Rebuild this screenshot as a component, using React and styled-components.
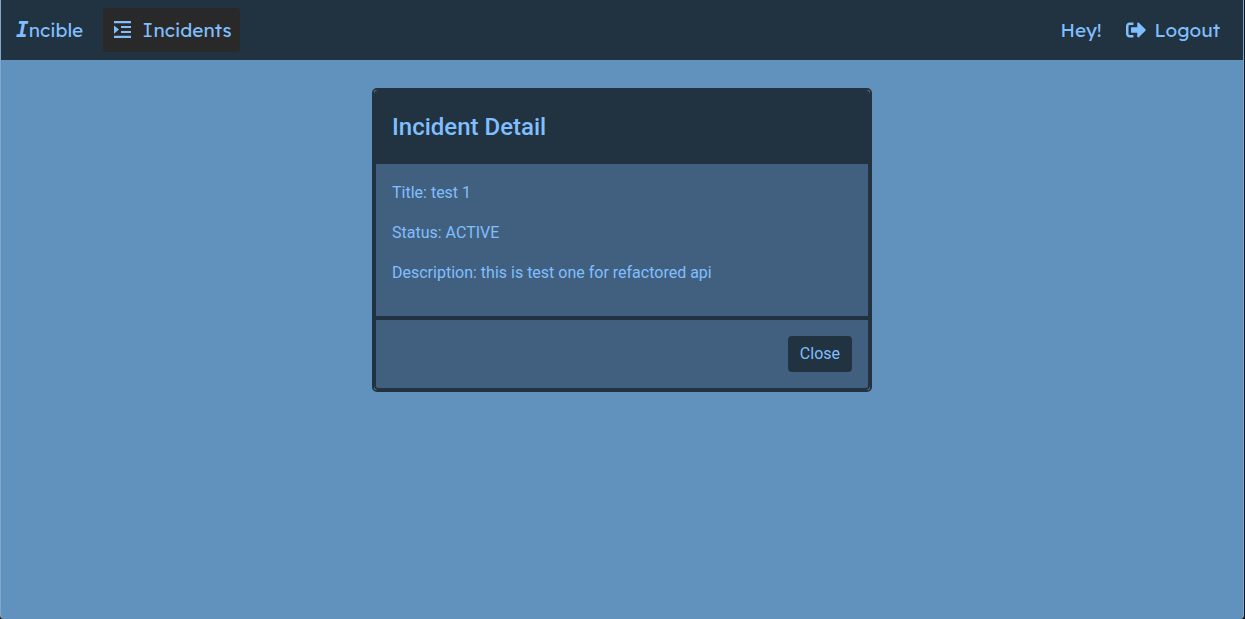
import React from "react";
import styled, { createGlobalStyle, ThemeProvider } from "styled-components";
import { FaSignOutAlt } from "react-icons/fa";

const theme = {
  sky: "#6192bd",
  navy: "#213240",
  slate: "#41607f",
  text: "#80bfff",
  active: "#292929",
};

const GlobalStyle = createGlobalStyle`
  *, *::before, *::after { box-sizing: border-box; }
  body {
    margin: 0;
    background: #10161c;
    color: ${theme.text};
    font-family: Roboto, "Liberation Sans", sans-serif;
    font-size: 16px;
    line-height: 24px;
  }
`;

const Page = styled.div`
  min-height: 100vh;
  margin-right: 1px;
  background: ${({ theme }) => theme.sky};
  border: solid rgba(255, 255, 255, 0.2);
  border-width: 0 1px;
  border-radius: 0 0 4px 4px;
  overflow: hidden;
`;

const Navbar = styled.header`
  display: flex;
  align-items: center;
  justify-content: space-between;
  height: 60px;
  padding: 8px 15px;
  background: ${({ theme }) => theme.navy};
  font-family: Lexend, Lato, sans-serif;
  font-size: 19px;
`;

const NavGroup = styled.nav`
  display: flex;
  align-items: center;
  gap: ${({ $gap }) => $gap}px;
`;

const Brand = styled.a`
  color: inherit;
  text-decoration: none;
`;

const Initial = styled.span`
  font-family: "DejaVu Sans Mono", monospace;
`;

const BrandInitial = styled(Initial)`
  font-size: 21px;
  font-style: italic;
  font-weight: 700;
`;

const NavLink = styled.a`
  display: flex;
  align-items: center;
  gap: 9px;
  height: 44px;
  padding: 0 8px;
  border-radius: 4px;
  color: inherit;
  background: ${({ $active, theme }) => ($active ? theme.active : "transparent")};
  text-decoration: none;
`;

const Greeting = styled.span``;

const Main = styled.main`
  display: flex;
  justify-content: center;
  padding: 28px 16px;
`;

const Card = styled.section`
  width: 100%;
  max-width: 500px;
  border: 2px solid ${({ theme }) => theme.navy};
  border-radius: 5px;
  background: #b4bfc8;
`;

const CardContent = styled.div`
  border: 2px solid ${({ theme }) => theme.navy};
  border-radius: 4px;
  background: ${({ theme }) => theme.slate};
  overflow: hidden;
`;

const CardHeader = styled.div`
  padding: 17px 16px 19px;
  background: ${({ theme }) => theme.navy};
`;

const CardTitle = styled.h1`
  margin: 0;
  font-size: 24px;
  font-weight: 500;
  line-height: 36px;
`;

const CardBody = styled.div`
  padding: 17px 16px 15px;
`;

const Detail = styled.p`
  margin: 0 0 16px;
`;

const CardFooter = styled.div`
  display: flex;
  justify-content: flex-end;
  padding: 16px;
  border-top: 4px solid ${({ theme }) => theme.navy};
`;

const Button = styled.button`
  height: 36px;
  padding: 0 12px;
  border: 0;
  border-radius: 4px;
  background: ${({ theme }) => theme.navy};
  color: inherit;
  font: inherit;
  cursor: pointer;
`;

function IndentIcon() {
  return (
    <svg width="22" height="22" viewBox="0 0 22 22" fill="currentColor" aria-hidden="true">
      <path d="M3 2h17v2.3H3zM10 7h10v2.1H10zM10 12h10v2.1H10zM3 16.8h17v2.3H3zM3 6.4l5 4.2-5 4.2z" />
    </svg>
  );
}

export default function App() {
  return (
    <ThemeProvider theme={theme}>
      <GlobalStyle />
      <Page>
        <Navbar>
          <NavGroup $gap={20}>
            <Brand href="#home">
              <BrandInitial>I</BrandInitial>ncible
            </Brand>
            <NavLink href="#incidents" $active>
              <IndentIcon />
              <span>
                <Initial>I</Initial>ncidents
              </span>
            </NavLink>
          </NavGroup>
          <NavGroup $gap={16}>
            <Greeting>Hey!</Greeting>
            <NavLink href="#logout">
              <FaSignOutAlt size={20} aria-hidden="true" />
              <span>Logout</span>
            </NavLink>
          </NavGroup>
        </Navbar>
        <Main>
          <Card aria-labelledby="incident-title">
            <CardContent>
              <CardHeader>
                <CardTitle id="incident-title">Incident Detail</CardTitle>
              </CardHeader>
              <CardBody>
                <Detail>Title: test 1</Detail>
                <Detail>Status: ACTIVE</Detail>
                <Detail>Description: this is test one for refactored api</Detail>
              </CardBody>
              <CardFooter>
                <Button type="button">Close</Button>
              </CardFooter>
            </CardContent>
          </Card>
        </Main>
      </Page>
    </ThemeProvider>
  );
}
